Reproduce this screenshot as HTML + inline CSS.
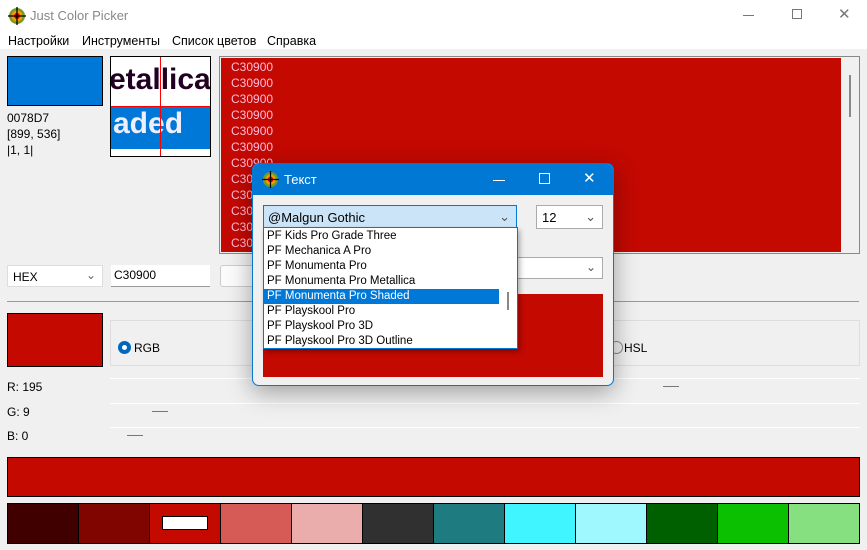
<!DOCTYPE html>
<html><head><meta charset="utf-8"><style>
*{box-sizing:border-box;margin:0;padding:0}
body{width:867px;height:550px;overflow:hidden;background:#f0f0f0;font-family:"Liberation Sans",sans-serif;font-size:12px;color:#000;position:relative}
.a{position:absolute}
.red{background:#c30900}
.sw{position:absolute;top:503px;height:41px;border:1px solid #000}
</style></head><body>
<div class="a" style="left:0;top:0;width:867px;height:49px;background:#fff"></div>
<svg class="a" style="left:8px;top:7px" width="18" height="18" viewBox="0 0 18 18"><circle cx="9" cy="9" r="8" fill="#7a9a20"/><circle cx="9" cy="9" r="5.5" fill="#f0a000"/><circle cx="9" cy="9" r="3" fill="#d00"/><path d="M9 0V18M0 9H18" stroke="#000" stroke-width="1.3"/></svg>
<div class="a" style="left:30px;top:8px;font-size:13px;color:#888">Just Color Picker</div>
<div class="a" style="left:743px;top:15px;width:11px;height:1px;background:#777"></div>
<div class="a" style="left:792px;top:9px;width:10px;height:10px;border:1px solid #777"></div>
<div class="a" style="left:838px;top:5px;font-size:15px;color:#777">✕</div>
<div class="a" style="left:8px;top:34px;font-size:12.5px">Настройки</div>
<div class="a" style="left:82px;top:34px;font-size:12.5px">Инструменты</div>
<div class="a" style="left:172px;top:34px;font-size:12.5px">Список цветов</div>
<div class="a" style="left:267px;top:34px;font-size:12.5px">Справка</div>
<div class="a" style="left:7px;top:56px;width:96px;height:50px;background:#0078d7;border:1px solid #000"></div>
<div class="a" style="left:7px;top:110px;line-height:16px">0078D7<br>[899, 536]<br>|1, 1|</div>
<div class="a" style="left:110px;top:56px;width:101px;height:101px;border:1px solid #000;background:#fff;overflow:hidden">
<div class="a" style="left:-2px;top:6px;font-size:30px;font-weight:bold;color:#202">etallica</div>
<div class="a" style="left:0;top:50px;width:100px;height:42px;background:#0078d7"></div>
<div class="a" style="left:2px;top:50px;font-size:30px;font-weight:bold;color:#eef">aded</div>
<div class="a" style="left:0;top:49px;width:100px;height:1px;background:#f00"></div>
<div class="a" style="left:49px;top:0;width:1px;height:100px;background:#f00"></div>
</div>
<div class="a" style="left:219px;top:56px;width:641px;height:198px;border:1px solid #888;background:#f0f0f0"></div>
<div class="a red" style="left:221px;top:58px;width:620px;height:194px;color:#fbd;line-height:16px;padding:1px 0 0 10px">C30900<br>C30900<br>C30900<br>C30900<br>C30900<br>C30900<br>C30900<br>C30900<br>C30900<br>C30900<br>C30900<br>C30900</div>
<div class="a" style="left:849px;top:75px;width:2px;height:42px;background:#888"></div>
<div class="a" style="left:7px;top:265px;width:96px;height:22px;background:#fff;border:1px solid #ddd;padding:4px 5px">HEX<span style="position:absolute;right:6px;top:2px;color:#666">⌄</span></div>
<div class="a" style="left:111px;top:265px;width:99px;height:22px;background:#fff;border-bottom:1px solid #999;padding:3px 3px">C30900</div>
<div class="a" style="left:220px;top:265px;width:50px;height:22px;background:#fbfbfb;border:1px solid #ccc;border-radius:3px"></div>
<div class="a" style="left:7px;top:301px;width:852px;height:1px;background:#999"></div>
<div class="a red" style="left:7px;top:313px;width:96px;height:54px;border:1px solid #000"></div>
<div class="a" style="left:110px;top:320px;width:750px;height:46px;border:1px solid #ddd"></div>
<div class="a" style="left:118px;top:341px;width:13px;height:13px;border-radius:50%;border:4px solid #0067c0;background:#fff"></div>
<div class="a" style="left:134px;top:341px">RGB</div>
<div class="a" style="left:610px;top:341px;width:13px;height:13px;border-radius:50%;border:1px solid #888"></div>
<div class="a" style="left:624px;top:341px">HSL</div>
<div class="a" style="left:7px;top:380px">R: 195</div>
<div class="a" style="left:7px;top:405px">G: 9</div>
<div class="a" style="left:7px;top:429px">B: 0</div>
<div class="a" style="left:110px;top:378px;width:750px;height:1px;background:#fff"></div>
<div class="a" style="left:110px;top:403px;width:750px;height:1px;background:#fff"></div>
<div class="a" style="left:110px;top:427px;width:750px;height:1px;background:#fff"></div>
<div class="a" style="left:663px;top:386px;width:16px;height:1px;background:#777"></div>
<div class="a" style="left:152px;top:411px;width:16px;height:1px;background:#777"></div>
<div class="a" style="left:127px;top:435px;width:16px;height:1px;background:#777"></div>
<div class="a red" style="left:7px;top:457px;width:853px;height:40px;border:1px solid #000"></div>
<div class="sw" style="left:7px;width:72px;background:#400000"></div>
<div class="sw" style="left:78px;width:72px;background:#800500"></div>
<div class="sw" style="left:149px;width:72px;background:#c30900"><div class="a" style="left:12px;top:12px;width:46px;height:14px;background:#fff;border:1px solid #000"></div></div>
<div class="sw" style="left:220px;width:72px;background:#d65a55"></div>
<div class="sw" style="left:291px;width:72px;background:#ebadab"></div>
<div class="sw" style="left:362px;width:72px;background:#303030"></div>
<div class="sw" style="left:433px;width:72px;background:#1e7b80"></div>
<div class="sw" style="left:504px;width:72px;background:#40f5ff"></div>
<div class="sw" style="left:575px;width:72px;background:#a0f8ff"></div>
<div class="sw" style="left:646px;width:72px;background:#006000"></div>
<div class="sw" style="left:717px;width:72px;background:#0ac000"></div>
<div class="sw" style="left:788px;width:72px;background:#87e07f"></div>
<div class="a" style="left:252px;top:163px;width:362px;height:223px;background:#f0f0f0;border:1px solid #0078d4;border-radius:7px;box-shadow:0 6px 24px rgba(0,0,0,.35);overflow:hidden">
<div class="a" style="left:0;top:0;width:362px;height:31px;background:#0078d4"></div>
<svg class="a" style="left:9px;top:7px" width="17" height="17" viewBox="0 0 18 18"><circle cx="9" cy="9" r="8" fill="#7a9a20"/><circle cx="9" cy="9" r="5.5" fill="#f0a000"/><circle cx="9" cy="9" r="3" fill="#d00"/><path d="M9 0V18M0 9H18" stroke="#000" stroke-width="1.3"/></svg>
<div class="a" style="left:31px;top:8px;color:#fff;font-size:13px">Текст</div>
<div class="a" style="left:240px;top:16px;width:12px;height:1px;background:#fff"></div>
<div class="a" style="left:286px;top:9px;width:11px;height:11px;border:1px solid #fff"></div>
<div class="a" style="left:330px;top:5px;color:#fff;font-size:15px">✕</div>
<div class="a" style="left:10px;top:41px;width:254px;height:23px;background:#cce4f7;border:1px solid #0078d4;padding:4px 4px;font-size:13px">@Malgun Gothic<span style="position:absolute;right:6px;top:3px;color:#555">⌄</span></div>
<div class="a" style="left:283px;top:41px;width:67px;height:24px;background:#fff;border:1px solid #aaa;padding:4px 5px;font-size:13px">12<span style="position:absolute;right:6px;top:3px;color:#555">⌄</span></div>
<div class="a" style="left:263px;top:93px;width:87px;height:22px;background:#fff;border:1px solid #aaa"><span style="position:absolute;right:6px;top:2px;color:#555">⌄</span></div>
<div class="a red" style="left:10px;top:130px;width:340px;height:83px"></div>
</div>
<div class="a" style="left:263px;top:227px;width:255px;height:122px;background:#fff;border:1px solid #0078d4;box-shadow:2px 3px 5px rgba(0,0,0,.3);font-size:11.5px;line-height:15px;padding-top:1px">
<div style="padding-left:3px">PF Kids Pro Grade Three</div>
<div style="padding-left:3px">PF Mechanica A Pro</div>
<div style="padding-left:3px">PF Monumenta Pro</div>
<div style="padding-left:3px">PF Monumenta Pro Metallica</div>
<div style="padding-left:3px;background:#0078d7;color:#fff;width:235px">PF Monumenta Pro Shaded</div>
<div style="padding-left:3px">PF Playskool Pro</div>
<div style="padding-left:3px">PF Playskool Pro 3D</div>
<div style="padding-left:3px">PF Playskool Pro 3D Outline</div>
<div class="a" style="left:243px;top:64px;width:2px;height:18px;background:#888"></div>
</div>
</body></html>
